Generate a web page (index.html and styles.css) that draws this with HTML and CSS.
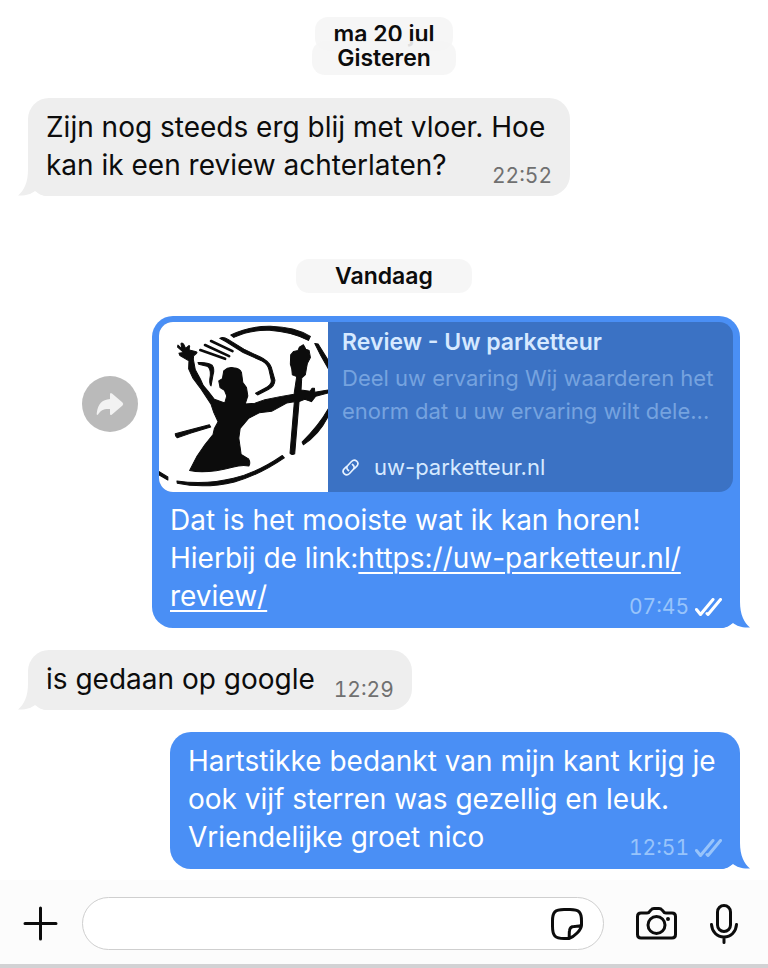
FILE: index.html
```
<!DOCTYPE html>
<html lang="nl">
<head>
<meta charset="UTF-8" />
<meta name="viewport" content="width=device-width, initial-scale=1.0" />
<title>Chat – Uw parketteur</title>
<link rel="stylesheet" href="styles.css">
</head>
<body>
<main class="chat">
  <div class="dates">
    <span class="date date-sm">ma 20 jul</span>
    <span class="date date-md">Gisteren</span>
  </div>

  <div class="row in">
    <div class="bubble wide">
      <p class="text">Zijn nog steeds erg blij met vloer. Hoe<br>kan ik een review achterlaten?</p>
      <span class="meta"><time>22:52</time></span>
      <svg class="tail" viewBox="0 0 30 26"><path d="M10 0C10 12 6 21 0 25.500C8 26 13 24 17 21C21 24 24 26 30 26V0Z"/></svg>
    </div>
  </div>

  <div class="dates today">
    <span class="date date-lg">Vandaag</span>
  </div>

  <div class="row out">
    <button class="share" type="button" aria-label="Doorsturen">
      <svg width="28" height="24" viewBox="0 0 28 24"><path d="M14 2.500Q14 0 16 1.500L26.500 10.500Q28 12 26.500 13.500L16 22.500Q14 24 14 21.500V17C8 16.500 5 18 2 22.500C1 23.500 .5 23 .8 21C2 12 6 7.500 14 7Z"/></svg>
    </button>
    <div class="bubble linked">
      <a class="card" href="https://uw-parketteur.nl/review/">
        <svg class="logo" viewBox="27 39 508 508" preserveAspectRatio="xMidYMid slice" role="img" aria-label="Uw parketteur">
          <g fill="#0c0c0c" stroke="#0c0c0c" stroke-width="3" stroke-linejoin="round">
            <path d="M85 108L97 119L94 104Q98 99 103 107L108 118L117 110Q122 108 119 116L119 123L137 127Q146 129 139 134L132 140L131 150L137 182L152 209L161 229L176 247L194 270L225 281L231 260L224 243L211 235L207 215L218 208L222 185Q236 172 251 176Q270 177 275 190L279 220L290 235L294 260L286 284L315 282L345 271L390 262L432 255L440 202L427 197L425 178L421 165L422 137L431 127L444 124L448 114L460 107L467 120L477 124L481 145L472 162L469 178L466 196L455 206L453 242L480 246L486 237L493 237L494 249L534 242V251L497 261L484 277L464 270L447 277L434 433Q426 438 420 431L433 277L410 281L365 306L328 310L296 327L271 357L267 386L274 435L296 448Q303 460 297 469Q275 465 248 473C206 484 162 492 120 483L142 440L166 405L190 375L194 357L205 337L192 309L184 285L151 235L130 207L117 179L118 155L91 139L88 132L102 130L84 114Z"/>
            <path d="M243 78Q297 51 362 52Q434 54 481 82L475 94Q423 68 359 64Q301 62 252 85Z"/>
            <path d="M210 88Q220 82 235 91L282 120L330 143Q356 155 364 174L375 213Q374 230 358 239L323 257L317 252L345 237Q366 226 364 213L357 181Q353 165 337 156L280 130L229 98Z"/>
            <path d="M494 103L504 105L534 153V178L512 139Z"/>
            <path d="M145 160Q172 158 187 168Q196 180 190 197L184 230Q177 225 182 198Q183 177 172 171L147 165Z"/>
            <path d="M77 373L119 362L179 346L183 353L124 371L83 385Q76 380 77 373Z"/>
            <path d="M534 299V321Q507 376 460 406L456 398Q508 346 534 299Z"/>
            <path d="M82 514Q169 526 251 506Q323 489 397 438L403 445Q329 496 254 517Q166 538 83 521Z"/>
            <path d="M27 485L55 502V511L27 495Z"/>
          </g>
          <g fill="none" stroke="#0c0c0c" stroke-width="8" stroke-linecap="round">
            <path d="M184 96L248 126M166 108L238 141M152 123L226 149"/>
          </g>
        </svg>
        <span class="info">
          <strong class="title">Review - Uw parketteur</strong>
          <span class="desc">Deel uw ervaring Wij waarderen het<br>enorm dat u uw ervaring wilt dele...</span>
          <span class="site">
            <svg width="17" height="17" viewBox="0 0 17 17" fill="none" stroke="#e6f2ff" stroke-width="1.700" stroke-linecap="round"><path d="M6.500 11.500C4.500 10 4.300 8 5.800 6.500L9.500 2.500C13-.8 18 3.500 14.800 7.200L12.500 9.500M10.500 5.500C12.500 7 12.700 9 11.200 10.500L7.500 14.500C4 17.800-1 13.500 2.200 9.800L4.500 7.500"/></svg>
            uw-parketteur.nl
          </span>
        </span>
      </a>
      <p class="text">Dat is het mooiste wat ik kan horen!<br>Hierbij de link:<a href="https://uw-parketteur.nl/review/">https://uw-parketteur.nl/<br>review/</a></p>
      <span class="meta"><time>07:45</time><svg class="ticks read" width="27" height="18" viewBox="0 0 27 18"><path d="M1.500 11.500L5.500 16.500L18 1.500M12 15.500L13 16.500L25.500 1.500"/></svg></span>
      <svg class="tail" viewBox="0 0 30 26"><path d="M10 0C10 12 6 21 0 25.500C8 26 13 24 17 21C21 24 24 26 30 26V0Z"/></svg>
    </div>
  </div>

  <div class="row in">
    <div class="bubble short">
      <p class="text">is gedaan op google</p>
      <span class="meta"><time>12:29</time></span>
      <svg class="tail" viewBox="0 0 30 26"><path d="M10 0C10 12 6 21 0 25.500C8 26 13 24 17 21C21 24 24 26 30 26V0Z"/></svg>
    </div>
  </div>

  <div class="row out">
    <div class="bubble reply">
      <p class="text">Hartstikke bedankt van mijn kant krijg je<br>ook vijf sterren was gezellig en leuk.<br>Vriendelijke groet nico</p>
      <span class="meta"><time>12:51</time><svg class="ticks" width="27" height="18" viewBox="0 0 27 18"><path d="M1.500 11.500L5.500 16.500L18 1.500M12 15.500L13 16.500L25.500 1.500"/></svg></span>
      <svg class="tail" viewBox="0 0 30 26"><path d="M10 0C10 12 6 21 0 25.500C8 26 13 24 17 21C21 24 24 26 30 26V0Z"/></svg>
    </div>
  </div>
</main>

<footer class="composer">
  <button class="icon plus" type="button" aria-label="Toevoegen">
    <svg width="35" height="35" viewBox="0 0 35 35"><path d="M17.500 2V33M2 17.500H33"/></svg>
  </button>
  <div class="field">
    <input type="text" aria-label="Bericht">
    <button class="icon" type="button" aria-label="Stickers">
      <svg width="32" height="32" viewBox="0 0 32 32"><path d="M18 30.500H13C4 30.500 1.500 28 1.500 18V13C1.500 4 4 1.500 13 1.500H19C28 1.500 30.500 4 30.500 13V17C30.500 22 23 29 18 30.500ZM18 30.500C18.500 28 18 25 18.500 22.500C19 19.500 20.500 18.500 23 18.500C26 18 29 18.500 30.500 17"/></svg>
    </button>
  </div>
  <button class="icon camera" type="button" aria-label="Camera">
    <svg width="41" height="33" viewBox="0 0 41 33"><path d="M5 6H11Q13 6 14 4L15 3Q16 1.500 18 1.500H23Q25 1.500 26 3L27 4Q28 6 30 6H36Q39.500 6 39.500 9.500V27.500Q39.500 31 36 31H5Q1.500 31 1.500 27.500V9.500Q1.500 6 5 6Z"/><circle cx="20.500" cy="18" r="8.500"/><circle class="dot" cx="32" cy="12" r="2"/></svg>
  </button>
  <button class="icon mic" type="button" aria-label="Spraakbericht">
    <svg width="28" height="40" viewBox="0 0 28 40"><rect x="7.500" y="1.500" width="13" height="26" rx="6.500"/><path d="M1.500 20.500C2 28 7 33 14 33S26 28 26.500 20.500M14 33V38.500"/></svg>
  </button>
</footer>
</body>
</html>
```
FILE: styles.css
```
:root {
  --blue: #4a8ff5;
  --grey: #eeeeee;
  --ink: #0c0c0c;
  --font-sans: Inter, "Liberation Sans", Arial, sans-serif;
}

* { box-sizing: border-box; }

body {
  margin: 0;
  min-height: 100vh;
  display: flex;
  flex-direction: column;
  background: #fff;
  color: var(--ink);
  font-family: var(--font-sans);
}

button {
  padding: 0;
  border: 0;
  background: none;
  cursor: pointer;
}
svg { display: block; flex: none; }

/* ---------- Conversation ---------- */
.chat {
  flex: 1;
  display: flex;
  flex-direction: column;
  gap: 22px;
  padding: 17px 28px 10px;
}

.dates {
  display: flex;
  flex-direction: column;
  align-items: center;
  margin-bottom: 1px;
}
.today { margin-top: 41px; }
.date {
  padding: 0 39px;
  border-radius: 13px;
  background: rgba(245, 245, 245, 0.9);
  font-size: 23px;
  font-weight: 600;
  line-height: 34px;
}
.date-sm { padding: 0 18px; }
.date-md { padding: 0 25px; }
.date + .date { margin-top: -10px; }

.row { display: flex; }
.out { justify-content: flex-end; }

/* ---------- Bubbles ---------- */
.bubble {
  position: relative;
  display: grid;
  padding: 10px 18px 12px;
  border-radius: 21px;
}
.in .bubble { background: var(--grey); }
.out .bubble {
  padding-bottom: 13px;
  background: var(--blue);
  color: #fff;
}

.wide { flex: 1; margin-right: 170px; }
.reply { flex: 1; margin-left: 142px; }
.linked { flex: 1; }
.short .text { padding-right: 79px; }

.text {
  grid-area: 2 / 1;
  margin: 0;
  font-size: 28px;
  line-height: 38px;
  white-space: nowrap;
}
.text a {
  color: inherit;
  text-decoration-thickness: 2px;
  text-underline-offset: 4px;
}

/* time sits in the same cell as the text */
.meta {
  grid-area: 2 / 1;
  place-self: end;
  display: flex;
  align-items: center;
  gap: 6px;
  font-size: 21px;
  font-variant-numeric: tabular-nums;
  line-height: 24px;
  color: #707070;
  margin-bottom: -4px;
}
.out .meta { color: #98c4fb; }

.ticks {
  fill: none;
  stroke: #98c4fb;
  stroke-width: 3;
  stroke-linecap: round;
  stroke-linejoin: round;
}
.read { stroke: #fff; }

.tail {
  position: absolute;
  bottom: 0;
  left: -10px;
  width: 30px;
  height: 26px;
  fill: var(--grey);
}
.out .tail {
  left: auto;
  right: -10px;
  fill: var(--blue);
  transform: scaleX(-1);
}

/* ---------- Link preview ---------- */
.share {
  display: grid;
  place-items: center;
  width: 56px;
  height: 56px;
  margin: 60px 14px 0 54px;
  border-radius: 50%;
  background: #bababa;
}
.share svg { fill: #f2f2f2; }

.linked { padding-top: 6px; }
.card {
  display: flex;
  height: 170px;
  margin: 0 -11px 9px;
  border-radius: 14px;
  overflow: hidden;
  background: #3b72c4;
  color: #d6e9ff;
  text-decoration: none;
}
.logo {
  width: 169px;
  height: 170px;
  background: #fff;
}
.info {
  flex: 1;
  min-width: 0;
  display: flex;
  flex-direction: column;
  padding: 4px 14px 8px;
  font-size: 22px;
  line-height: 33px;
  white-space: nowrap;
}
.title { font-size: 23px; font-weight: 600; }
.desc { margin-top: 3px; color: #76a3df; }
.site {
  display: flex;
  align-items: center;
  gap: 15px;
  margin-top: auto;
}

/* ---------- Composer ---------- */
.composer {
  display: flex;
  align-items: center;
  padding: 17px 30px 14px 23px;
  border-bottom: 4px solid #d2d2d4;
  background: #fcfcfc;
}
.icon svg {
  fill: none;
  stroke: var(--ink);
  stroke-width: 3;
  stroke-linecap: round;
  stroke-linejoin: round;
}
.icon .dot { fill: var(--ink); stroke: none; }
.field {
  flex: 1;
  display: flex;
  align-items: center;
  height: 53px;
  margin: 0 32px 0 24px;
  padding: 0 20px;
  border: 1px solid #cfcfcf;
  border-radius: 27px;
  background: #fff;
}
.field input {
  flex: 1;
  min-width: 0;
  border: 0;
  outline: 0;
  background: none;
  font: 28px var(--font-sans);
}
.mic { margin-left: 33px; }
```
